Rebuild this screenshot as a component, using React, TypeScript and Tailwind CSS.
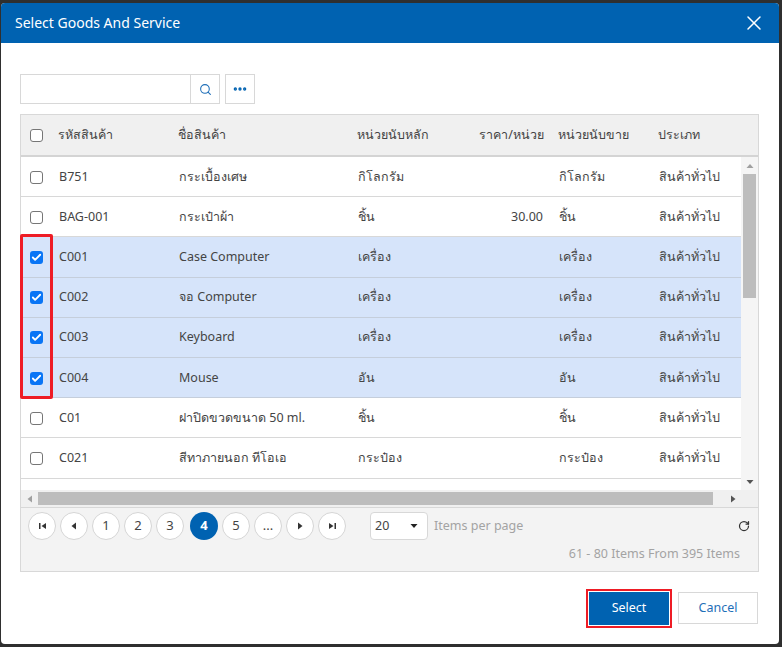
import { X, Search, MoreHorizontal, RotateCw, Check } from 'lucide-react'

const font = "font-['Noto_Sans','DejaVu_Sans',sans-serif]"

type Row = {
  code: string
  name: string
  unit: string
  price?: string
  saleUnit: string
  checked?: boolean
}

const rows: Row[] = [
  { code: 'B751', name: 'กระเบื้องเศษ', unit: 'กิโลกรัม', saleUnit: 'กิโลกรัม' },
  { code: 'BAG-001', name: 'กระเป๋าผ้า', unit: 'ชิ้น', price: '30.00', saleUnit: 'ชิ้น' },
  { code: 'C001', name: 'Case Computer', unit: 'เครื่อง', saleUnit: 'เครื่อง', checked: true },
  { code: 'C002', name: 'จอ Computer', unit: 'เครื่อง', saleUnit: 'เครื่อง', checked: true },
  { code: 'C003', name: 'Keyboard', unit: 'เครื่อง', saleUnit: 'เครื่อง', checked: true },
  { code: 'C004', name: 'Mouse', unit: 'อัน', saleUnit: 'อัน', checked: true },
  { code: 'C01', name: 'ฝาปิดขวดขนาด 50 ml.', unit: 'ชิ้น', saleUnit: 'ชิ้น' },
  { code: 'C021', name: 'สีทาภายนอก ทีโอเอ', unit: 'กระป๋อง', saleUnit: 'กระป๋อง' },
]

function Box({ checked }: { checked?: boolean }) {
  if (checked) {
    return (
      <span className="flex h-[13px] w-[13px] items-center justify-center rounded-[3px] bg-[#0a75f5]">
        <Check className="h-[11px] w-[11px] text-white" strokeWidth={4} />
      </span>
    )
  }
  return <span className="block h-[13px] w-[13px] rounded-[3px] border border-[#767676] bg-white" />
}

function PageBtn({ children, active }: { children: React.ReactNode; active?: boolean }) {
  return (
    <span
      className={
        active
          ? 'flex h-[28px] w-[28px] items-center justify-center rounded-full bg-[#0062b1] text-[13px] font-bold text-white'
          : 'flex h-[28px] w-[28px] items-center justify-center rounded-full border border-[#d5d5d5] bg-white text-[13px] text-[#444]'
      }
    >
      {children}
    </span>
  )
}

function Tri({ dir }: { dir: 'l' | 'r' | 'u' | 'd' }) {
  const pts = { l: '6,0.5 1.5,4 6,7.5', r: '2,0.5 6.5,4 2,7.5', u: '0.5,6 4,2 7.5,6', d: '0.5,2 4,6 7.5,2' }[dir]
  return (
    <svg width="8" height="8" viewBox="0 0 8 8" className="fill-current">
      <polygon points={pts} />
    </svg>
  )
}

export default function App() {
  return (
    <div className={`h-[647px] w-[782px] overflow-hidden bg-[#2f2f2f] pt-[3px] pr-[3px] pb-[3px] pl-px text-[12.5px] text-[#444] ${font}`}>
      <div className="flex h-[641px] w-[778px] flex-col overflow-hidden rounded-[4px] bg-white">
        {/* header */}
        <div className="flex h-[40px] shrink-0 items-center justify-between bg-[#0062b1] pr-[13px] pl-[14px] text-white">
          <span className="text-[14px] leading-[42px]">Select Goods And Service</span>
          <X className="h-[24px] w-[24px]" strokeWidth={1.5} />
        </div>

        <div className="flex flex-1 flex-col pt-[31px] pr-[21px] pl-[19px]">
          {/* search */}
          <div className="flex h-[30px] gap-[5px]">
            <div className="flex w-[200px] border border-[#d8d8d8]">
              <div className="flex-1" />
              <div className="flex w-[29px] items-center justify-center border-l border-[#d8d8d8] text-[#1f6fb8]">
                <Search className="h-[13px] w-[13px]" strokeWidth={2} />
              </div>
            </div>
            <div className="flex w-[30px] items-center justify-center border border-[#d8d8d8] text-[#0062b1]">
              <MoreHorizontal className="h-[16px] w-[16px]" strokeWidth={3} />
            </div>
          </div>

          {/* grid */}
          <div className="mt-[10px] flex h-[458px] w-[739px] flex-col border border-[#d8d8d8]">
            <div className="flex h-[42px] shrink-0 items-center border-b-2 border-[#d4d4d4] bg-[#f0f0f0]">
              <span className="flex w-[36px] pl-[9px]"><Box /></span>
              <span className="w-[120px] pl-px">รหัสสินค้า</span>
              <span className="w-[179px] pl-px">ชื่อสินค้า</span>
              <span className="w-[80px] pl-px">หน่วยนับหลัก</span>
              <span className="w-[108px] text-right">ราคา/หน่วย</span>
              <span className="ml-[14px] w-[100px]">หน่วยนับขาย</span>
              <span>ประเภท</span>
            </div>

            <div className="flex h-[333px] shrink-0">
              <div className="w-[721px]">
                {rows.map((row) => (
                  <div
                    key={row.code}
                    className={`flex h-[40.2px] items-center border-b pt-px ${row.checked ? 'border-[#c5cedb] bg-[#d6e4fa]' : 'border-[#d8d8d8] bg-white'}`}
                  >
                    <span className="flex w-[36px] pl-[9px]"><Box checked={row.checked} /></span>
                    <span className="w-[120px] pl-[2px]">{row.code}</span>
                    <span className="w-[179px] pl-[2px]">{row.name}</span>
                    <span className="w-[80px] pl-[2px]">{row.unit}</span>
                    <span className="w-[107px] text-right">{row.price}</span>
                    <span className="ml-[15px] w-[100px] pl-px">{row.saleUnit}</span>
                    <span className="pl-px">สินค้าทั่วไป</span>
                  </div>
                ))}
              </div>
              {/* vertical scrollbar */}
              <div className="flex w-[17px] flex-col items-center bg-[#f5f5f5] text-[#a0a0a0]">
                <span className="flex h-[17px] items-center"><Tri dir="u" /></span>
                <div className="h-[124px] w-[13px] bg-[#bdbdbd]" />
                <div className="flex-1" />
                <span className="flex h-[17px] items-center text-[#555]"><Tri dir="d" /></span>
              </div>
            </div>

            {/* horizontal scrollbar */}
            <div className="flex h-[17px] shrink-0 items-center bg-[#f0f0f0]">
              <span className="flex w-[17px] justify-center text-[#a0a0a0]"><Tri dir="l" /></span>
              <div className="h-[13px] w-[675px] bg-[#bdbdbd]" />
              <span className="ml-[11px] flex w-[17px] justify-center text-[#555]"><Tri dir="r" /></span>
            </div>

            {/* pager */}
            <div className="flex flex-1 flex-col border-t border-[#d8d8d8] bg-[#f3f3f3] px-[7px] pt-[4px]">
              <div className="flex items-center">
                <div className="flex gap-[4px]">
                  <PageBtn><svg width="9" height="8" viewBox="0 0 9 8" className="fill-[#333]"><rect x="1" y="1" width="1.5" height="6" /><polygon points="8,1 3.5,4 8,7" /></svg></PageBtn>
                  <PageBtn><span className="text-[#333]"><Tri dir="l" /></span></PageBtn>
                  <PageBtn>1</PageBtn>
                  <PageBtn>2</PageBtn>
                  <PageBtn>3</PageBtn>
                  <span className="ml-[2px]"><PageBtn active>4</PageBtn></span>
                  <PageBtn>5</PageBtn>
                  <PageBtn>...</PageBtn>
                  <PageBtn><span className="text-[#333]"><Tri dir="r" /></span></PageBtn>
                  <PageBtn><svg width="9" height="8" viewBox="0 0 9 8" className="fill-[#333]"><rect x="6.5" y="1" width="1.5" height="6" /><polygon points="1,1 5.5,4 1,7" /></svg></PageBtn>
                </div>
                <div className="ml-[24px] flex h-[28px] w-[58px] items-center justify-between rounded-[4px] border border-[#d8d8d8] bg-white pr-[9px] pl-[4px]">
                  <span>20</span>
                  <span className="text-[#222]"><Tri dir="d" /></span>
                </div>
                <span className="ml-[6px] text-[#a3a3a3]">Items per page</span>
                <RotateCw className="mr-[1px] ml-auto h-[12px] w-[12px] text-[#333]" strokeWidth={2.5} />
              </div>
              <div className="mt-[5px] pr-[11px] text-right text-[#a3a3a3]">61 - 80 Items From 395 Items</div>
            </div>
          </div>

          {/* actions */}
          <div className="mt-[17px] flex justify-end gap-[6px]">
            <div className="flex h-[39px] w-[86px] items-center justify-center border-[2px] border-[#ee1c25] p-px">
              <span className="flex h-full w-full items-center justify-center bg-[#0062b1] text-white">Select</span>
            </div>
            <div className="mt-[3px] flex h-[32px] w-[80px] items-center justify-center border border-[#d8d8d8] text-[#1f6fb8]">Cancel</div>
          </div>
        </div>
      </div>

      {/* red highlight around the ticked rows */}
      <div className="absolute top-[234px] left-[20px] h-[165px] w-[33px] rounded-[2px] border-[3px] border-[#ee1c25]" />
    </div>
  )
}
